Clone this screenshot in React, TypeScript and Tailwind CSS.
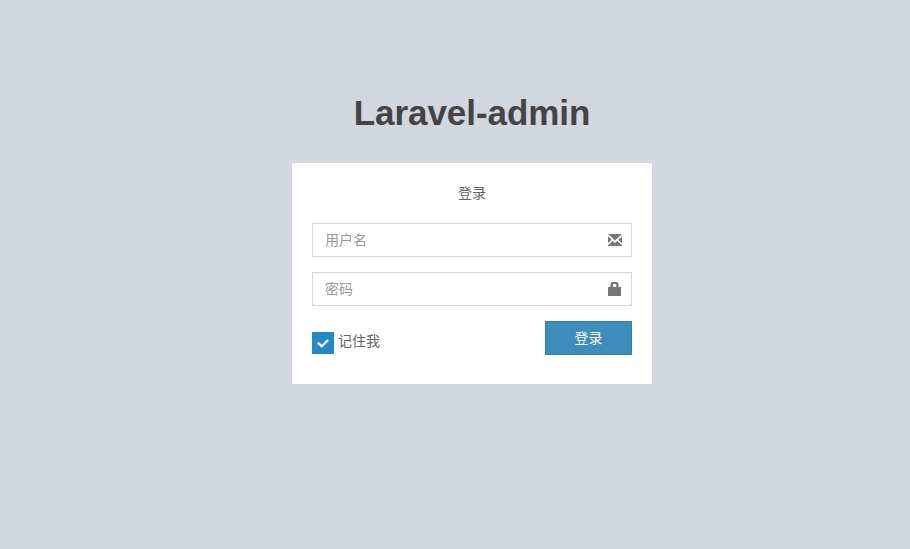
import React, { useState } from "react";

function EnvelopeIcon() {
  return (
    <svg width="14" height="12" viewBox="0 0 14 12" fill="#777777" aria-hidden="true">
      <path d="M0 0h14L7 6.500z" />
      <path d="M0 2.300 3.700 5.800 0 9.200z" />
      <path d="M14 2.300 10.300 5.800 14 9.200z" />
      <path d="M0 12v-.7L4.700 7 7 9l2.300-2L14 11.300v.7z" />
    </svg>
  );
}

function LockIcon() {
  return (
    <svg width="14" height="14" viewBox="0 0 14 14" fill="#777777" aria-hidden="true">
      <path
        fillRule="evenodd"
        d="M2.500 5V1.600L4 0h5l1.500 1.600V5H12.600l.4.400v8.200l-.4.400H.4L0 13.600V5.400L.4 5zM5 5h3.200V2H5z"
      />
    </svg>
  );
}

interface FieldProps {
  type: string;
  placeholder: string;
  icon: React.ReactNode;
}

function Field({ type, placeholder, icon }: FieldProps) {
  return (
    <label className="mb-[15px] flex h-[34px] items-center border border-[#d2d6de] bg-white pr-[9px] pl-3">
      <input
        type={type}
        placeholder={placeholder}
        className="h-full min-w-0 flex-1 bg-transparent text-sm text-[#555] outline-none placeholder:text-[#999]"
      />
      <span className="flex w-[14px] shrink-0 justify-center">{icon}</span>
    </label>
  );
}

export default function App() {
  const [remember, setRemember] = useState(true);

  return (
    <div className="min-h-screen overflow-hidden bg-[#d2d6de] pl-[292px] font-['Liberation_Sans','Noto_Sans_CJK_SC',sans-serif] text-sm text-[#666]">
      <main className="mt-[88px] w-[360px]">
        <h1 className="mb-[25px] h-[50px] text-center text-[35px] leading-[50px] font-bold tracking-[-0.05px] text-[#444]">
          Laravel-admin
        </h1>
        <form className="h-[221px] bg-white p-5" onSubmit={(e) => e.preventDefault()}>
          <p className="mb-5 h-5 text-center leading-5">登录</p>
          <Field type="text" placeholder="用户名" icon={<EnvelopeIcon />} />
          <Field type="password" placeholder="密码" icon={<LockIcon />} />
          <div className="flex items-start justify-between">
            <label className="mt-[10px] flex cursor-pointer items-center gap-1">
              <input
                type="checkbox"
                className="sr-only"
                checked={remember}
                onChange={(e) => setRemember(e.target.checked)}
              />
              <span className="mt-px flex size-[22px] items-center justify-center bg-[#2489c5]">
                {remember && (
                  <svg width="12" height="9" viewBox="0 0 12 9" fill="none" stroke="#fff" strokeWidth="2.3" aria-hidden="true">
                    <path d="M1.500 4.300 4.700 7.200 10.400 1.600" strokeLinecap="round" />
                  </svg>
                )}
              </span>
              <span className="-mt-[3px] leading-5">记住我</span>
            </label>
            <button type="submit" className="h-[34px] w-[87px] border border-[#367fa9] bg-[#3c8dbc] leading-5 text-white">
              登录
            </button>
          </div>
        </form>
      </main>
    </div>
  );
}
